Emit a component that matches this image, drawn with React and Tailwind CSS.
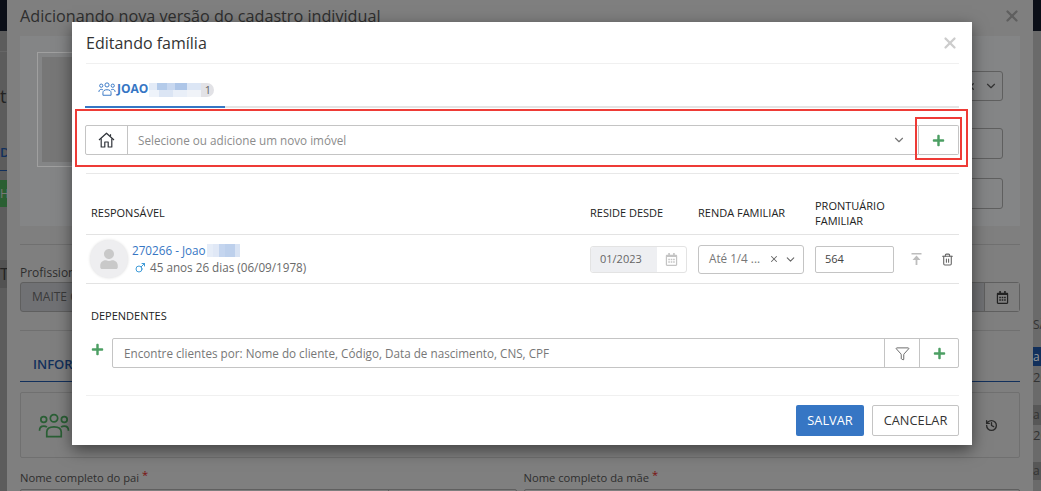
import { ChevronDown, X, Filter, History, Mars, Trash2 } from "lucide-react";
import { FaPlus, FaUser, FaRegCalendarAlt } from "react-icons/fa";

function Plus({ className = "" }) {
  return <FaPlus className={`text-[#4c9f63] ${className}`} />;
}

function ToTop() {
  return (
    <svg width="11" height="12" viewBox="0 0 11 12" className="text-[#bdbdbd]" fill="currentColor">
      <rect x="0.5" y="0" width="10" height="1.5" />
      <path d="M5.5 2.5 9.5 7H6.4v5H4.6V7H1.5z" />
    </svg>
  );
}

function HomeIcon() {
  return (
    <svg width="17" height="16" viewBox="0 0 17 16" fill="none" stroke="#30343a" strokeWidth="1.2" strokeLinejoin="round">
      <path d="M1 8 8.5 1.2 16 8" />
      <path d="M3.2 6.5V15h3.6v-5h3.4v5h3.6V6.5" />
      <path d="M12.5 2.2v2" />
    </svg>
  );
}

// three people, used on the tab and on the panel behind the dialog
function PeopleIcon({ width, height, className = "" }) {
  return (
    <svg width={width} height={height} viewBox="0 0 24 19" fill="none" stroke="currentColor" strokeWidth="1.3" className={className}>
      <circle cx="12" cy="4" r="2.8" />
      <circle cx="4.2" cy="5" r="2.2" />
      <circle cx="19.8" cy="5" r="2.2" />
      <path d="M6.5 18v-3.5c0-2.4 2-4 5.5-4s5.5 1.6 5.5 4V18z" />
      <path d="M1 13.5c0-2.2 1.3-3.5 3.2-3.5 1 0 1.8.2 2.4.8" />
      <path d="M23 13.5c0-2.2-1.3-3.5-3.2-3.5-1 0-1.8.2-2.4.8" />
    </svg>
  );
}

// blurred-out surname next to the record number
function Redacted() {
  return (
    <span className="ml-[1px] inline-flex h-[13px] overflow-hidden">
      <span className="w-[6px] bg-[#e6edf8]" />
      <span className="w-[6px] bg-[#e0e8f6]" />
      <span className="w-[6px] bg-[#c4d5ef]" />
      <span className="w-[10px] bg-[#bdd0ec]" />
      <span className="w-[5px] bg-[#d8e3f4]" />
    </span>
  );
}

// blurred-out surname on the tab, two rows of soft blocks
function RedactedTab() {
  return (
    <span className="flex h-[14px] w-[52px] flex-col">
      <span className="flex h-[7px]">
        <span className="w-[8px] bg-[#e3ebf7]" />
        <span className="w-[10px] bg-[#b4cbea]" />
        <span className="w-[8px] bg-[#c8d8f0]" />
        <span className="w-[12px] bg-[#aec6e8]" />
        <span className="w-[14px] bg-[#dce6f5]" />
      </span>
      <span className="flex h-[7px]">
        <span className="w-[10px] bg-[#eef3fa]" />
        <span className="w-[14px] bg-[#dbe5f4]" />
        <span className="w-[14px] bg-[#e9eff8]" />
        <span className="w-[14px] bg-[#f0f3f8]" />
      </span>
    </span>
  );
}

function Backdrop() {
  return (
    <div className="flex h-[491px] w-[1041px] overflow-hidden bg-[#7f7f7f] text-[#2e2e2e]">
      {/* page peeking out on the left */}
      <div className="w-[7px] shrink-0 overflow-hidden bg-[#5c5c5c] text-[#222]">
        <div className="h-[31px] bg-[#0b0f18]" />
        <div className="mt-[20px] h-[1px] bg-[#666]" />
        <p className="mt-[32px] text-[18px] leading-[24px]">t</p>
        <p className="mt-[34px] text-[13px] font-semibold leading-[20px] text-[#12305c]">DA</p>
        <div className="mt-[8px] h-[1px] bg-[#12305c]" />
        <div className="mt-[9px] flex h-[27px] items-center bg-[#2a5f32] text-[12px] leading-[16px] text-[#777]">HA</div>
        <div className="mt-[53px] flex h-[28px] items-center bg-[#525252] text-[16px]">T</div>
      </div>

      <div className="w-[1026px] shrink-0 px-[13px]">
        <div className="flex h-[36px] items-center justify-between pb-[5px]">
          <h2 className="text-[16.2px] leading-[24px]">Adicionando nova versão do cadastro individual</h2>
          <X size={18} strokeWidth={3} className="mr-[-1px] text-[#5f5f5f]" />
        </div>

        <div className="flex h-[190px] justify-between bg-[#848586] py-[16px] pl-[17px] pr-[17px]">
          <div className="h-[115px] w-[120px] border border-[#a0a0a0] p-[4px]">
            <div className="h-full bg-[#777]" />
          </div>
          <div className="flex w-[600px] flex-col">
            <div className="mt-[19px] flex h-[30px] items-center justify-end gap-[8px] rounded-[3px] border border-[#5f5f5f] pr-[4px]">
              <X size={11} strokeWidth={3} className="text-[#333]" />
              <ChevronDown size={14} className="text-[#333]" />
            </div>
            <div className="mt-[27px] h-[31px] rounded-[3px] border border-[#5f5f5f]" />
            <div className="mt-[19px] h-[31px] rounded-[3px] border border-[#5f5f5f]" />
          </div>
        </div>

        <div className="mt-[18px] h-[1px] bg-[#707070]" />
        <p className="mt-[20px] text-[12px] leading-[16px]">Profissional</p>
        <div className="mt-[1px] flex h-[30px] rounded-[3px] border border-[#5f5f5f] bg-[#707174]">
          <span className="flex flex-1 items-center px-[11px] text-[12px] text-[#3a3a3a]">MAITE C</span>
          <span className="flex w-[35px] items-center justify-center border-l border-[#5f5f5f] bg-[#7f7f7f]">
            <FaRegCalendarAlt size={13} className="text-[#222]" />
          </span>
        </div>
        <div className="mt-[18px] h-[1px] bg-[#707070]" />

        <div className="mt-[24px] border-b border-[#12305c]">
          <span className="ml-[13px] block pb-[7px] text-[13px] font-semibold leading-[19px] text-[#12305c]">INFORMAÇÕES</span>
        </div>
        <div className="mt-[10px] flex h-[66px] items-center justify-between rounded-[2px] border border-[#707070] pl-[17px] pr-[21px]">
          <PeopleIcon width={32} height={25} className="text-[#2a5f35]" />
          <History size={13} strokeWidth={2.5} className="text-[#2a2a2a]" />
        </div>

        <div className="mt-[12px] grid grid-cols-2 gap-x-[7px]">
          <div>
            <p className="text-[11.2px] leading-[16px]">
              Nome completo do pai <span className="relative top-[-3px] text-[#7a1010]">*</span>
            </p>
            <div className="mt-[3px] flex h-[20px] rounded-[2px] border border-[#5f5f5f]">
              <span className="flex-1" />
              <span className="w-[128px] border-l border-[#5f5f5f]" />
            </div>
          </div>
          <div>
            <p className="text-[11.2px] leading-[16px]">
              Nome completo da mãe <span className="relative top-[-3px] text-[#7a1010]">*</span>
            </p>
            <div className="mt-[3px] h-[20px] rounded-[2px] border border-[#5f5f5f]" />
          </div>
        </div>
      </div>

      {/* page peeking out on the right */}
      <div className="w-[8px] shrink-0 overflow-hidden bg-[#6a6a6a] text-[#333]">
        <div className="h-[31px] bg-[#0b0f18]" />
        <p className="mt-[286px] text-[12px] leading-[16px]">SÃ</p>
        <div className="mt-[14px] flex h-[19px] items-center bg-[#12305c] text-[12px] text-[#999]">a</div>
        <p className="mt-[1px] text-[13px] leading-[20px]">20</p>
        <div className="mt-[18px] flex h-[20px] items-center bg-[#575757] text-[12px]">a</div>
        <p className="text-[13px] leading-[20px]">20</p>
        <div className="mt-[17px] flex h-[18px] items-center bg-[#575757] text-[12px]">a</div>
      </div>
    </div>
  );
}

function FamilyRow() {
  return (
    <div className="grid h-[49px] grid-cols-[504px_108px_117px_90px_1fr] items-center border-b border-[#e3e3e3]">
      <div className="flex items-center gap-[4px] pl-[4px]">
        <div className="flex h-[38px] w-[38px] items-center justify-center overflow-hidden rounded-full bg-[#eeeef0] shadow-[0_0_3px_#ddd]">
          <FaUser size={20} className="text-[#c9c9c9]" />
        </div>
        <div>
          <p className="flex items-center text-[11.7px] leading-[17px] text-[#3676c4]">
            270266 - Joao
            <Redacted />
          </p>
          <p className="flex items-center gap-[4px] pl-[2px] text-[11.7px] leading-[17px] text-[#6a6a6a]">
            <Mars size={12} className="text-[#3f9bd8]" />
            45 anos 26 dias (06/09/1978)
          </p>
        </div>
      </div>
      <div className="flex h-[27px] w-[97px] rounded-[3px] border border-[#e3e3e3]">
        <span className="flex w-[66px] items-center rounded-l-[3px] bg-[#eeeff2] pl-[9px] text-[11px] text-[#666]">01/2023</span>
        <span className="flex flex-1 items-center justify-center">
          <FaRegCalendarAlt size={13} className="text-[#c4c4c4]" />
        </span>
      </div>
      <div className="flex h-[29px] w-[106px] items-center rounded-[3px] border border-[#c4c4c4] pl-[10px] pr-[6px] text-[11.7px] text-[#777]">
        <span className="flex-1">Até 1/4 ...</span>
        <X size={10} strokeWidth={2.5} className="mr-[5px] text-[#666]" />
        <ChevronDown size={13} className="text-[#666]" />
      </div>
      <div className="flex h-[27px] w-[79px] items-center rounded-[2px] border border-[#c4c4c4] px-[9px] text-[11px] text-[#444]">564</div>
      <div className="flex items-center gap-[19px] pl-[6px]">
        <ToTop />
        <Trash2 size={13} className="text-[#666]" />
      </div>
    </div>
  );
}

function FamilyDialog() {
  return (
    <div className="absolute left-[72px] top-[22px] flex h-[423px] w-[900px] flex-col bg-white pl-[14px] pr-[13px] font-['Open_Sans',sans-serif] shadow-[0_5px_15px_rgba(0,0,0,0.5)]">
      <div className="flex h-[42px] items-center justify-between border-b border-[#f0f0f0]">
        <h3 className="text-[16px] leading-[24px] text-[#333]">Editando família</h3>
        <X size={18} strokeWidth={3} className="text-[#cccccc]" />
      </div>

      <div className="ml-[-1px] mt-[14px] flex h-[30px] border-b-2 border-[#e4e4e4]">
        <div className="mb-[-2px] flex h-[30px] w-[140px] items-start gap-[1px] border-b-2 border-[#3676c4] pl-[13px] pt-[2px]">
          <PeopleIcon width={18} height={14} className="mt-[2px] text-[#3676c4]" />
          <span className="text-[12px] font-bold leading-[18px] text-[#3676c4]">JOAO</span>
          <span className="mt-[3px] flex items-start">
            <RedactedTab />
            <span className="flex h-[14px] w-[13px] items-center justify-center rounded-r-full bg-[#e2e2e6] text-[11px] text-[#666]">1</span>
          </span>
        </div>
      </div>

      <div className="ml-[-1px] mt-[17px] flex h-[30px]">
        <div className="flex flex-1 rounded-l-[2px] border border-[#c4c4c4]">
          <span className="flex w-[42px] items-center justify-center border-r border-[#c4c4c4]">
            <HomeIcon />
          </span>
          <span className="flex flex-1 items-center pl-[10px] pt-[2px] text-[11.7px] text-[#8c8c8c]">Selecione ou adicione um novo imóvel</span>
          <span className="flex w-[26px] items-center">
            <ChevronDown size={14} className="text-[#777]" />
          </span>
        </div>
        <button className="flex w-[40px] items-center justify-center rounded-r-[2px] border border-l-0 border-[#c4c4c4]">
          <Plus className="text-[13px]" />
        </button>
      </div>

      <div className="mt-[18px] h-[1px] bg-[#e8e8e8]" />

      <div className="grid h-[61px] grid-cols-[504px_108px_117px_90px_1fr] items-center border-b border-[#e3e3e3] pt-[17px] text-[11px] leading-[15px] text-[#222]">
        <span className="pl-[5px]">RESPONSÁVEL</span>
        <span>RESIDE DESDE</span>
        <span>RENDA FAMILIAR</span>
        <span>PRONTUÁRIO FAMILIAR</span>
      </div>

      <FamilyRow />

      <p className="ml-[5px] mt-[24px] text-[11px] font-medium leading-[16px] text-[#222]">DEPENDENTES</p>

      <div className="mt-[14px] flex items-start">
        <Plus className="ml-[5px] mt-[5px] text-[13px]" />
        <div className="ml-[8px] flex h-[30px] flex-1 rounded-[2px] border border-[#c4c4c4]">
          <span className="flex flex-1 items-center pl-[11px] pt-[2px] text-[11.7px] text-[#777]">
            Encontre clientes por: Nome do cliente, Código, Data de nascimento, CNS, CPF
          </span>
          <span className="flex w-[35px] items-center justify-center border-l border-[#c4c4c4]">
            <Filter size={15} strokeWidth={1.25} className="text-[#444]" />
          </span>
          <span className="flex w-[39px] items-center justify-center border-l border-[#c4c4c4]">
            <Plus className="text-[13px]" />
          </span>
        </div>
      </div>

      <div className="mt-[27px] h-[1px] bg-[#f0f0f0]" />

      <div className="mt-[9px] flex justify-end gap-[8px] text-[12.8px]">
        <button className="h-[31px] w-[68px] rounded-[2px] bg-[#3676c4] text-white">SALVAR</button>
        <button className="h-[31px] w-[87px] rounded-[2px] border border-[#c4c4c4] text-[#333]">CANCELAR</button>
      </div>
    </div>
  );
}

export default function App() {
  return (
    <div className="relative h-[491px] w-[1041px] overflow-hidden font-['Open_Sans',sans-serif]">
      <Backdrop />
      <FamilyDialog />
      {/* annotation boxes drawn over the screenshot */}
      <div className="absolute left-[75px] top-[109px] h-[58px] w-[893px] border-2 border-[#ee3b36]" />
      <div className="absolute left-[915px] top-[117px] h-[43px] w-[47px] border-2 border-[#ee3b36]" />
    </div>
  );
}
